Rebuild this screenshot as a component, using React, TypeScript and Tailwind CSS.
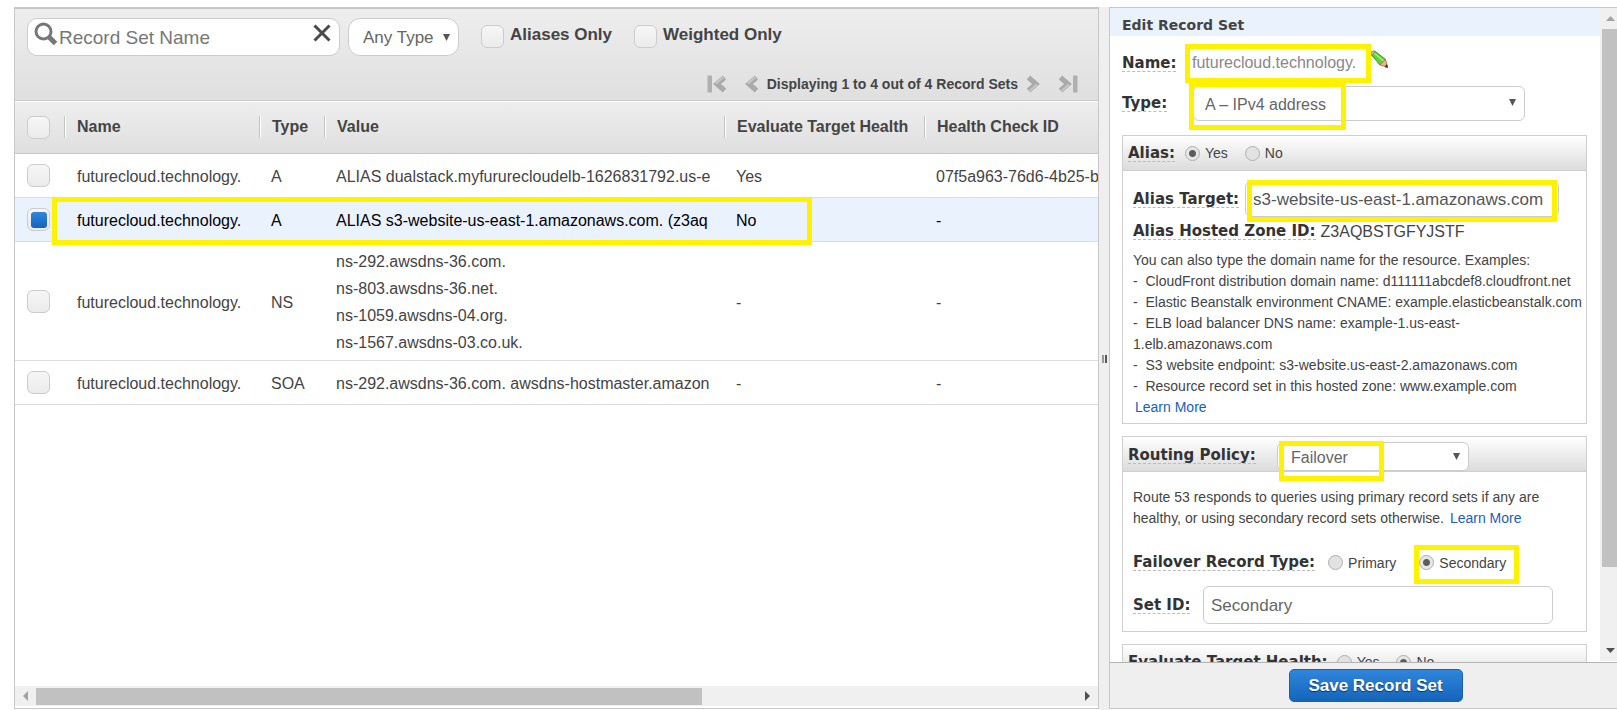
import { useState, type ReactNode } from 'react';

const RECORDS = [
  {
    type: 'A',
    values: ['ALIAS dualstack.myfururecloudelb-1626831792.us-e'],
    evaluate: 'Yes',
    healthCheck: '07f5a963-76d6-4b25-b',
  },
  {
    type: 'A',
    values: ['ALIAS s3-website-us-east-1.amazonaws.com. (z3aq'],
    evaluate: 'No',
    healthCheck: '-',
  },
  {
    type: 'NS',
    values: [
      'ns-292.awsdns-36.com.',
      'ns-803.awsdns-36.net.',
      'ns-1059.awsdns-04.org.',
      'ns-1567.awsdns-03.co.uk.',
    ],
    evaluate: '-',
    healthCheck: '-',
  },
  {
    type: 'SOA',
    values: ['ns-292.awsdns-36.com. awsdns-hostmaster.amazon'],
    evaluate: '-',
    healthCheck: '-',
  },
];

const COLUMNS = ['Name', 'Type', 'Value', 'Evaluate Target Health', 'Health Check ID'];

const checkboxClass =
  "grid size-[23px] shrink-0 appearance-none place-content-center rounded-md border border-[#ccc] bg-linear-to-b from-[#f6f6f6] to-[#ebebeb] checked:before:size-4 checked:before:rounded-[3px] checked:before:bg-linear-to-b checked:before:from-[#2f86dc] checked:before:to-[#1464ba] checked:before:content-['']";

function Highlight({ className }: { className: string }) {
  return <div className={`pointer-events-none absolute z-10 border-5 border-[#fff200] ${className}`} />;
}

function FieldLabel({ htmlFor, children }: { htmlFor?: string; children: ReactNode }) {
  const cls =
    "border-b border-dashed border-[#bbb] font-['DejaVu_Sans',sans-serif] text-[15px] leading-4 font-bold whitespace-nowrap text-[#333]";
  return htmlFor ? (
    <label htmlFor={htmlFor} className={`block w-fit ${cls}`}>{children}</label>
  ) : (
    <span className={`block w-fit ${cls}`}>{children}</span>
  );
}

function Radio({ name, label, defaultChecked }: { name: string; label: string; defaultChecked?: boolean }) {
  return (
    <label className="flex items-center gap-[5px] text-sm leading-4">
      <input
        type="radio"
        name={name}
        defaultChecked={defaultChecked}
        className="size-[15px] appearance-none rounded-full border border-[#b0b0b0] bg-[#e2e2e2] checked:bg-[radial-gradient(circle,#5c5c5c_3px,#e6e6e6_4px)]"
      />
      {label}
    </label>
  );
}

function Caret({ className }: { className: string }) {
  return (
    <svg viewBox="0 0 8 8" className={`pointer-events-none absolute size-[7px] fill-[#555] ${className}`}>
      <path d="M0 0h8L4 8z" />
    </svg>
  );
}

function Chevron({ kind }: { kind: 'first' | 'prev' | 'next' | 'last' }) {
  const bar = kind === 'first' || kind === 'last';
  const flip = kind === 'next' || kind === 'last';
  return (
    <svg
      viewBox={bar ? '0 0 20 18' : '6 0 14 18'}
      className={`h-[18px] ${bar ? 'w-5' : 'w-3.5'} ${flip ? 'rotate-180' : ''}`}
    >
      {bar && <path d="M.5.5h4.500v17H.5z" fill="#b0b0b0" />}
      <path d="M17.500 2.500 10 9l7.500 6.500" fill="none" stroke="#aaa" strokeWidth="5" />
      <path d="M16.500 2 9 8.500" fill="none" stroke="#c6c6c6" strokeWidth="2" />
    </svg>
  );
}

function PencilIcon() {
  return (
    <svg viewBox="0 0 18 18" className="size-[18px]">
      <path d="M.8 4.500Q.5 1 4 .8L6 2 2.500 6z" fill="#f4b4ac" stroke="#d8605a" />
      <path d="M2 5.500 5.500 1.500 15.500 9.500 10 15z" fill="#5fd035" stroke="#3f9a24" />
      <path d="m4.500 3.500 9 7.500" stroke="#a6f080" strokeWidth="1.500" />
      <path d="m10 15 5.500-5.500 2 7.500z" fill="#edb888" stroke="#b07c4c" />
      <path d="m14.500 17 2.500-3 1 4z" fill="#333" />
    </svg>
  );
}

function Toolbar() {
  return (
    <div className="flex h-[93px] shrink-0 flex-col justify-between border-b border-white bg-linear-to-b from-[#eee] to-[#dfdfdf] pt-[9px] shadow-[inset_0_-1px_0_#c8c8c8]">
      <div className="flex items-start pl-3">
        <div className="flex h-[38px] w-[313px] items-center rounded-[10px] border border-[#ccc] bg-white">
          <svg viewBox="0 0 24 24" className="mb-1.5 ml-1.5 size-6 shrink-0" fill="none">
            <circle cx="9.500" cy="9.500" r="7.500" stroke="#777" strokeWidth="3" />
            <path d="m15 15 6.500 6.500" stroke="#777" strokeWidth="5" />
          </svg>
          <input
            aria-label="Record Set Name"
            placeholder="Record Set Name"
            className="min-w-0 flex-1 bg-transparent pt-0.5 pl-px text-[19px] leading-6 outline-none placeholder:text-[#777]"
          />
          <button aria-label="Clear search" className="mr-2 mb-2">
            <svg viewBox="0 0 18 18" className="size-[18px]">
              <path d="m1.500 1.500 15 15m0-15-15 15" stroke="#4a4a4a" strokeWidth="3" />
            </svg>
          </button>
        </div>
        <div className="relative ml-2">
          <select
            aria-label="Record type filter"
            className="h-[38px] w-[111px] appearance-none rounded-xl border border-[#ccc] bg-white pt-px pl-3.5 text-[17px] text-[#666]"
          >
            <option>Any Type</option>
          </select>
          <Caret className="top-4 right-[9px]" />
        </div>
        <label className="ml-[22px] flex items-start gap-1.5 pt-[7px] text-[17px] leading-5 font-bold">
          <input type="checkbox" className={checkboxClass} />
          Aliases Only
        </label>
        <label className="ml-[22px] flex items-start gap-1.5 pt-[7px] text-[17px] leading-5 font-bold">
          <input type="checkbox" className={checkboxClass} />
          Weighted Only
        </label>
      </div>
      <div className="mr-5 mb-2 flex items-center justify-end text-sm leading-[18px] font-bold">
        <button aria-label="First page"><Chevron kind="first" /></button>
        <button aria-label="Previous page" className="ml-[18px]"><Chevron kind="prev" /></button>
        <span className="mx-2">Displaying 1 to 4 out of 4 Record Sets</span>
        <button aria-label="Next page"><Chevron kind="next" /></button>
        <button aria-label="Last page" className="ml-[18px]"><Chevron kind="last" /></button>
      </div>
    </div>
  );
}

function RecordTable() {
  const [selected, setSelected] = useState(1);
  return (
    <div className="relative flex-1 overflow-hidden">
      <table className="w-[1703px] table-fixed border-separate border-spacing-0 text-base">
        <colgroup>
          <col className="w-[49px]" />
          <col className="w-[195px]" />
          <col className="w-[65px]" />
          <col className="w-[400px]" />
          <col className="w-[200px]" />
          <col />
        </colgroup>
        <thead>
          <tr className="h-[52px] bg-linear-to-b from-[#eee] to-[#dfdfdf]">
            <th className="border-b border-[#c8c8c8] pl-3">
              <input type="checkbox" aria-label="Select all" className={checkboxClass} />
            </th>
            {COLUMNS.map((col) => (
              <th key={col} className="border-b border-[#c8c8c8] pb-0.5 text-left font-bold whitespace-nowrap">
                <span className="flex h-[22px] items-center border-l border-[#c4c4c4] pl-3 shadow-[inset_1px_0_0_#fff]">
                  {col}
                </span>
              </th>
            ))}
          </tr>
        </thead>
        <tbody>
          {RECORDS.map((rec, i) => (
            <tr
              key={i}
              className={`h-11 leading-[27px] *:border-b *:border-[#ddd] ${i === selected ? 'bg-[#eaf2fe] text-black' : ''}`}
            >
              <td className="pl-3">
                <input
                  type="checkbox"
                  aria-label={`Select ${rec.type} record`}
                  checked={i === selected}
                  onChange={() => setSelected(i)}
                  className={checkboxClass}
                />
              </td>
              <td className="pt-0.5 pl-[13px]">futurecloud.technology.</td>
              <td className="px-3 pt-0.5">{rec.type}</td>
              <td className="px-3 pt-[6px] pb-1">
                <div className="overflow-hidden whitespace-nowrap">
                  {rec.values.map((v) => (
                    <div key={v}>{v}</div>
                  ))}
                </div>
              </td>
              <td className="px-3 pt-0.5">{rec.evaluate}</td>
              <td className="px-3 pt-0.5">{rec.healthCheck}</td>
            </tr>
          ))}
        </tbody>
      </table>
      <Highlight className="top-[95px] left-[37px] h-[48px] w-[760px]" />
    </div>
  );
}

function RecordSets() {
  return (
    <section className="flex min-w-0 flex-1 flex-col border border-t-2 border-[#c8c8c8] bg-white">
      <Toolbar />
      <RecordTable />
      <div className="mb-0.5 flex h-5 items-center bg-[#f0f0f0]">
        <svg viewBox="0 0 5 10" className="mx-2 h-2.5 w-[5px] fill-[#a3a3a3]"><path d="M5 0v10L0 5z" /></svg>
        <div className="flex h-[17px] flex-1">
          <div className="w-[64%] bg-[#c1c1c1]" />
        </div>
        <svg viewBox="0 0 5 10" className="mx-2 h-2.5 w-[5px] fill-[#505050]"><path d="M0 0v10l5-5z" /></svg>
      </div>
    </section>
  );
}

function Group({ header, children }: { header: ReactNode; children?: ReactNode }) {
  return (
    <div className="mt-3 border border-[#d0d0d0]">
      <div className="flex h-[35px] items-center border-b border-[#d0d0d0] bg-linear-to-b from-white to-[#dcdcdc] pl-[5px]">
        {header}
      </div>
      {children}
    </div>
  );
}

function LearnMore() {
  return <a href="#learn" className="ml-0.5 text-[#1a62b0]">Learn More</a>;
}

function EditForm() {
  return (
    <div className="min-w-0 flex-1">
      <h2 className="flex h-7 items-center bg-[#eaf2fe] pt-1.5 pl-3 font-['DejaVu_Sans',sans-serif] text-sm font-bold">
        Edit Record Set
      </h2>
      <div className="pr-[13px] pl-3">
        <div className="flex h-[50px] items-center pt-1">
          <div className="w-[70px]"><FieldLabel>Name:</FieldLabel></div>
          <div className="relative text-base text-[#888]">
            futurecloud.technology.
            <Highlight className="-top-[7px] -left-[7px] h-[39px] w-[186px]" />
          </div>
          <button aria-label="Edit name" className="mb-2 ml-3.5"><PencilIcon /></button>
        </div>
        <div className="flex items-center pb-0.5">
          <div className="w-[71px]"><FieldLabel htmlFor="type">Type:</FieldLabel></div>
          <div className="relative">
            <select
              id="type"
              className="block h-[35px] w-[332px] appearance-none rounded-md border border-[#ccc] bg-white pt-0.5 pl-[11px] text-base text-[#666]"
            >
              <option>A – IPv4 address</option>
            </select>
            <Caret className="top-[13px] right-[9px]" />
            <Highlight className="-top-1 -left-1 h-[48px] w-[157px]" />
          </div>
        </div>

        <Group
          header={
            <div role="radiogroup" aria-label="Alias" className="flex items-center">
              <FieldLabel>Alias:</FieldLabel>
              <div className="ml-2.5 flex gap-[17px]">
                <Radio name="alias" label="Yes" defaultChecked />
                <Radio name="alias" label="No" />
              </div>
            </div>
          }
        >
          <div className="pt-2.5 pr-2.5 pb-[5px] pl-2.5">
            <div className="flex items-center gap-1.5">
              <FieldLabel htmlFor="target">Alias Target:</FieldLabel>
              <div className="relative">
                <input
                  id="target"
                  defaultValue="s3-website-us-east-1.amazonaws.com"
                  className="block h-9 w-[314px] rounded-md border border-[#ccc] pt-0.5 pl-[7px] text-[17px] text-[#555]"
                />
                <Highlight className="-top-px left-0.5 h-[42px] w-[310px]" />
              </div>
            </div>
            <div className="mt-1.5 flex h-[17px] items-center gap-[5px]">
              <FieldLabel>Alias Hosted Zone ID:</FieldLabel>
              <span className="text-base">Z3AQBSTGFYJSTF</span>
            </div>
            <div className="mt-2.5 text-sm leading-[21px]">
              <p>You can also type the domain name for the resource. Examples:</p>
              <p>-&nbsp; CloudFront distribution domain name: d111111abcdef8.cloudfront.net</p>
              <p className="whitespace-nowrap">-&nbsp; Elastic Beanstalk environment CNAME: example.elasticbeanstalk.com</p>
              <p>-&nbsp; ELB load balancer DNS name: example-1.us-east-<wbr />1.elb.amazonaws.com</p>
              <p>-&nbsp; S3 website endpoint: s3-website.us-east-2.amazonaws.com</p>
              <p>-&nbsp; Resource record set in this hosted zone: www.example.com</p>
              <p><LearnMore /></p>
            </div>
          </div>
        </Group>

        <Group
          header={
            <div className="flex items-center pt-[5px]">
              <div className="w-[149px] pb-0.5"><FieldLabel htmlFor="policy">Routing Policy:</FieldLabel></div>
              <div className="relative">
                <select
                  id="policy"
                  className="block h-[29px] w-48 appearance-none rounded-md border border-[#ccc] bg-white pt-0.5 pl-[13px] text-base text-[#666]"
                >
                  <option>Failover</option>
                </select>
                <Caret className="top-[11px] right-[9px]" />
                <Highlight className="-top-px left-0.5 h-[40px] w-[105px]" />
              </div>
            </div>
          }
        >
          <div className="px-2.5 pt-[15px] pb-[7px]">
            <p className="text-sm leading-[21px]">
              Route 53 responds to queries using primary record sets if any are healthy, or using secondary
              record sets otherwise. <LearnMore />
            </p>
            <div role="radiogroup" aria-label="Failover Record Type" className="mt-[25px] flex h-[17px] items-center">
              <FieldLabel>Failover Record Type:</FieldLabel>
              <div className="ml-[13px] flex gap-[23px]">
                <Radio name="failover" label="Primary" />
                <div className="relative">
                  <Radio name="failover" label="Secondary" defaultChecked />
                  <Highlight className="-top-2.5 -left-[5px] h-[39px] w-[105px]" />
                </div>
              </div>
            </div>
            <div className="mt-[15px] flex items-center">
              <div className="w-[70px]"><FieldLabel htmlFor="setid">Set ID:</FieldLabel></div>
              <input
                id="setid"
                defaultValue="Secondary"
                className="h-[38px] w-[350px] rounded-md border border-[#ccc] pt-0.5 pl-[7px] text-[17px] text-[#666]"
              />
            </div>
          </div>
        </Group>

        <Group
          header={
            <div role="radiogroup" aria-label="Evaluate Target Health" className="flex items-center">
              <FieldLabel>Evaluate Target Health:</FieldLabel>
              <div className="ml-[9px] flex gap-[17px]">
                <Radio name="health" label="Yes" />
                <Radio name="health" label="No" defaultChecked />
              </div>
            </div>
          }
        />
      </div>
    </div>
  );
}

export default function App() {
  return (
    <main className="flex h-screen overflow-hidden bg-white pt-[7px] pl-3.5 font-['Liberation_Sans',Arial,sans-serif] text-[#444]">
      <div className="flex min-w-0 flex-1 pb-px">
        <RecordSets />
      </div>
      <div className="flex w-2.5 items-center justify-center gap-px bg-[#efefef]">
        <div className="h-2 w-0.5 bg-[#999]" />
        <div className="h-2 w-0.5 bg-[#555]" />
      </div>
      <aside className="mb-px flex w-[508px] shrink-0 flex-col border border-r-0 border-[#c8c8c8]">
        <div className="flex min-h-0 flex-1 overflow-hidden">
          <EditForm />
          <div className="mb-px flex w-[17px] flex-col items-end bg-[#f0f0f0]">
            <svg viewBox="0 0 9 5" className="my-2 mr-0.5 h-[5px] w-[9px] shrink-0 fill-[#a3a3a3]"><path d="M0 5h9L4.500 0z" /></svg>
            <div className="w-[15px] flex-1">
              <div className="h-[88%] bg-[#c1c1c1]" />
            </div>
            <svg viewBox="0 0 9 5" className="my-2 mr-0.5 h-[5px] w-[9px] shrink-0 fill-[#505050]"><path d="M0 0h9L4.500 5z" /></svg>
          </div>
        </div>
        <footer className="flex h-[46px] shrink-0 items-center justify-center border-t border-[#b4b4b4] bg-[#efefef] pr-6 pl-12">
          <button className="h-[33px] w-[174px] rounded-[5px] border border-[#1a62b0] bg-linear-to-b from-[#2f86dc] to-[#1464ba] text-[17px] font-bold text-white text-shadow-[0_1px_1px_#0008]">
            Save Record Set
          </button>
        </footer>
      </aside>
    </main>
  );
}
